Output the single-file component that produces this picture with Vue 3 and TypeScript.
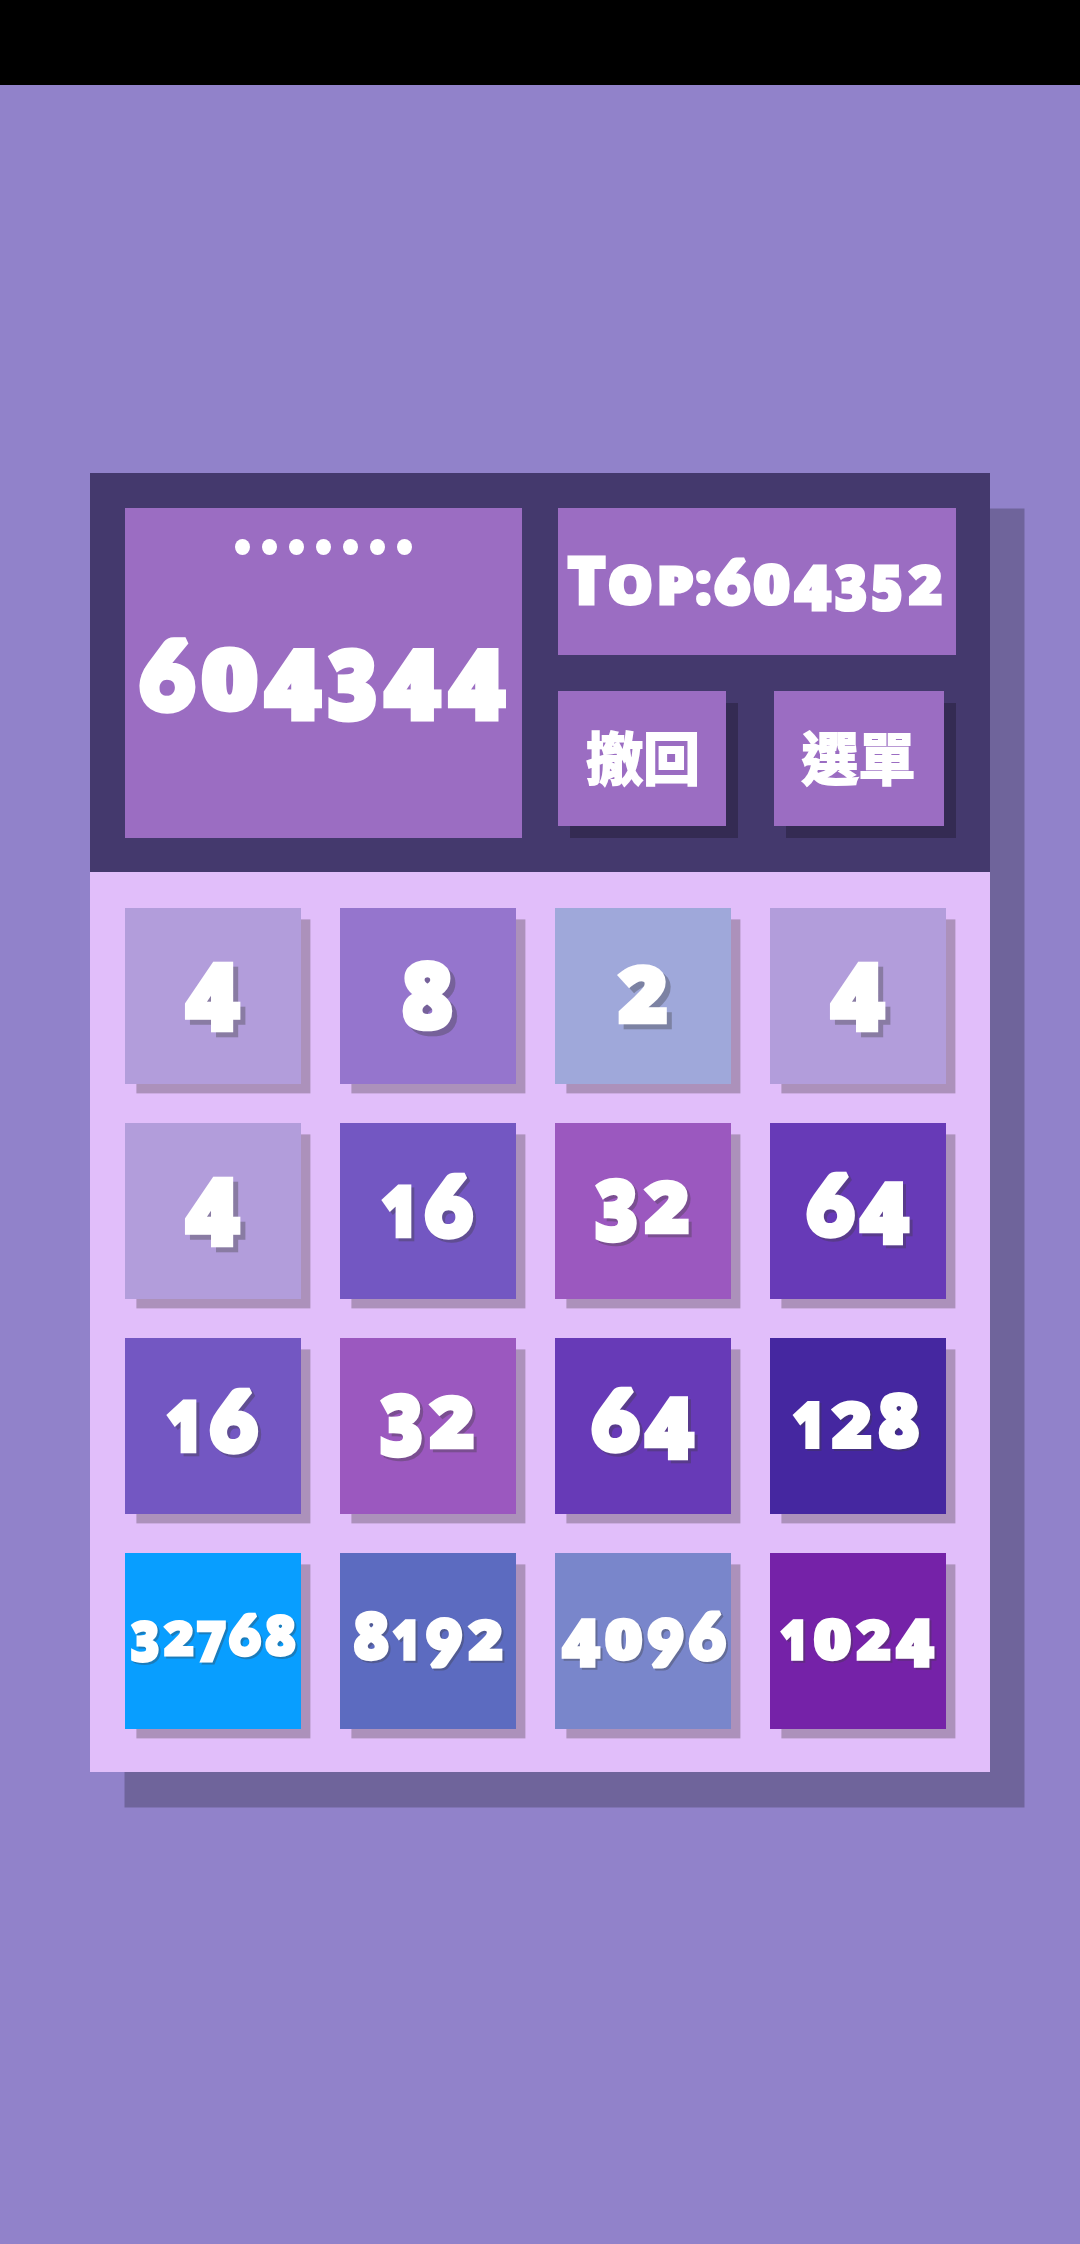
<script setup lang="ts">
interface Label {
  text: string
  centers: number[]
  baseline: number
  height: number
}

interface Tile extends Label {
  color: string
  drop: number
}

interface Glyph {
  char: string
  place: string
  size: number
  stroke: number
  slanted: boolean
}

// Old-style numerals: low figures are shorter, descending ones hang below the baseline.
const scaleOf: Record<string, number> = {
  '0': 0.87, '1': 0.83, '2': 0.84, '6': 0.98, '8': 0.985, '9': 0.98, T: 1.04, o: 0.85, p: 0.83, ':': 0.95,
}
const stretchOf: Record<string, number> = {
  '0': 1.16, '1': 0.88, '2': 1.08, '3': 0.88, '5': 0.86, '7': 0.92, '8': 0.96, o: 1.07, p: 1.13, ':': 0.95,
}
const descending = '34579'

function glyphs(label: Label): Glyph[] {
  return Array.from(label.text).map((char, i) => {
    const slanted = char === '6' || char === '9'
    const y = label.baseline - label.height * 0.03 + (descending.includes(char) ? label.height * 0.13 : 0)
    return {
      char,
      place: `translate(${label.centers[i]} ${y}) scale(${stretchOf[char] ?? 1} 1)`,
      size: label.height * 1.27 * (scaleOf[char] ?? 1),
      stroke: label.height * (slanted ? 0.1 : 0.065),
      slanted,
    }
  })
}

const score: Label = { text: '604344', centers: [126, 314, 504, 683, 863, 1057], baseline: 611, height: 227 }
const top: Label = {
  text: 'Top:604352',
  centers: [86, 217, 352, 437, 523, 642, 765, 880, 988, 1104],
  baseline: 291,
  height: 147,
}

const four: Tile = { text: '4', centers: [262], baseline: 343, height: 216, drop: 5, color: '#b29ddb' }
const sixteen: Tile = { text: '16', centers: [177, 325], baseline: 346, height: 196, drop: 3.8, color: '#7357c2' }
const thirtyTwo: Tile = { text: '32', centers: [183, 335], baseline: 332, height: 196, drop: 3.8, color: '#9b58bf' }
const sixtyFour: Tile = { text: '64', centers: [180, 342], baseline: 341, height: 196, drop: 3.8, color: '#673ab7' }

const tiles: Tile[] = [
  four,
  { text: '8', centers: [261], baseline: 365, height: 216, drop: 5, color: '#9575cd' },
  { text: '2', centers: [263], baseline: 349, height: 216, drop: 5, color: '#9fa8da' },
  four,
  four,
  sixteen,
  thirtyTwo,
  sixtyFour,
  sixteen,
  thirtyTwo,
  sixtyFour,
  { text: '128', centers: [115, 245, 385], baseline: 333, height: 175, drop: 2.6, color: '#4527a0' },
  { text: '32768', centers: [59, 161, 258, 358, 465], baseline: 311, height: 131, drop: 2.6, color: '#089eff' },
  { text: '8192', centers: [93, 198, 312, 436], baseline: 323, height: 151, drop: 2.8, color: '#5c6bc0' },
  { text: '4096', centers: [77, 205, 332, 455], baseline: 323, height: 151, drop: 2.8, color: '#7986cb' },
  { text: '1024', centers: [71, 186, 310, 434], baseline: 323, height: 151, drop: 2.8, color: '#7522a8' },
]
</script>

<template>
  <div class="screen">
    <div class="status"></div>
    <main class="panel">
      <header class="head">
        <section class="score">
          <div class="dots"><i v-for="n in 7" :key="n"></i></div>
          <svg class="label" viewBox="0 0 1194 991">
            <text v-for="(g, i) in glyphs(score)" :key="i" :class="{ slanted: g.slanted }" :transform="g.place" :font-size="g.size" :stroke-width="g.stroke">{{ g.char }}</text>
          </svg>
        </section>
        <div class="side">
          <section class="top">
            <svg class="label" viewBox="0 0 1194 441">
              <text v-for="(g, i) in glyphs(top)" :key="i" :class="{ slanted: g.slanted }" :transform="g.place" :font-size="g.size" :stroke-width="g.stroke">{{ g.char }}</text>
            </svg>
          </section>
          <div class="actions">
            <button type="button" class="undo">撤回</button>
            <button type="button" class="menu">選單</button>
          </div>
        </div>
      </header>
      <section class="board">
        <div v-for="(tile, n) in tiles" :key="n" class="tile" :style="{ backgroundColor: tile.color }">
          <svg class="label shaded" viewBox="0 0 526 526" :style="{ '--drop': tile.drop + 'px' }">
            <text v-for="(g, i) in glyphs(tile)" :key="i" :class="{ slanted: g.slanted }" :transform="g.place" :font-size="g.size" :stroke-width="g.stroke">{{ g.char }}</text>
          </svg>
        </div>
      </section>
    </main>
  </div>
</template>

<style>
body {
  background: #9182ca;
}
</style>

<style scoped>
.screen {
  width: 1080px;
  height: 2244px;
  overflow: hidden;
  background: #9182ca;
  box-sizing: border-box;
}
.status {
  height: 85px;
  background: #000;
}
.panel {
  width: 900px;
  margin: 388px 0 0 90px;
  box-shadow: 34.5px 35.5px 0 rgba(0, 0, 0, 0.23);
}
.head {
  display: flex;
  gap: 36px;
  height: 399px;
  padding: 34.5px 34.5px 34px;
  box-sizing: border-box;
  background: #44396d;
}
.score,
.top,
button {
  background: #9b6dc2;
}
.score {
  position: relative;
  width: 397.5px;
  height: 330.5px;
}
.dots {
  position: absolute;
  top: 31px;
  left: 0;
  right: 0;
  display: flex;
  justify-content: center;
  gap: 12px;
}
.dots i {
  width: 15px;
  height: 16px;
  border-radius: 50%;
  background: #fff;
}
.side {
  display: flex;
  flex-direction: column;
  justify-content: space-between;
  width: 397.5px;
}
.top {
  height: 147px;
}
.actions {
  display: flex;
  justify-content: space-between;
  height: 135.5px;
  margin-bottom: 12px;
  padding-right: 12px;
}
button {
  display: block;
  height: 135.5px;
  padding: 0 0 5px;
  border: 0;
  box-shadow: 12px 12px 0 rgba(0, 0, 0, 0.23);
  color: #fff;
  font: 700 57px/1 "Noto Sans CJK TC", sans-serif;
  -webkit-text-stroke: 2px #fff;
}
.undo {
  width: 168px;
  padding-left: 2px;
}
.menu {
  width: 170px;
}
.board {
  display: grid;
  grid-template-columns: repeat(4, 176px);
  grid-auto-rows: 175.5px;
  gap: 39.5px 39.1px;
  height: 900px;
  padding: 36px 34.7px;
  box-sizing: border-box;
  background: #e1befa;
}
.tile {
  box-shadow: 10.4px 10.4px 0 -1px #ac91bb;
}
.label {
  display: block;
  width: 100%;
  height: 100%;
  overflow: visible;
}
.label text {
  fill: #fff;
  stroke: #fff;
  stroke-linejoin: miter;
  stroke-miterlimit: 2;
  text-anchor: middle;
  text-transform: uppercase;
  font-family: "Open Sans", Lato, sans-serif;
  font-weight: 800;
}
.label .slanted {
  font-family: Lato, "Open Sans", sans-serif;
  font-weight: 900;
}
.shaded {
  filter: drop-shadow(var(--drop) var(--drop) 0.5px rgba(60, 60, 60, 0.35));
}
</style>
